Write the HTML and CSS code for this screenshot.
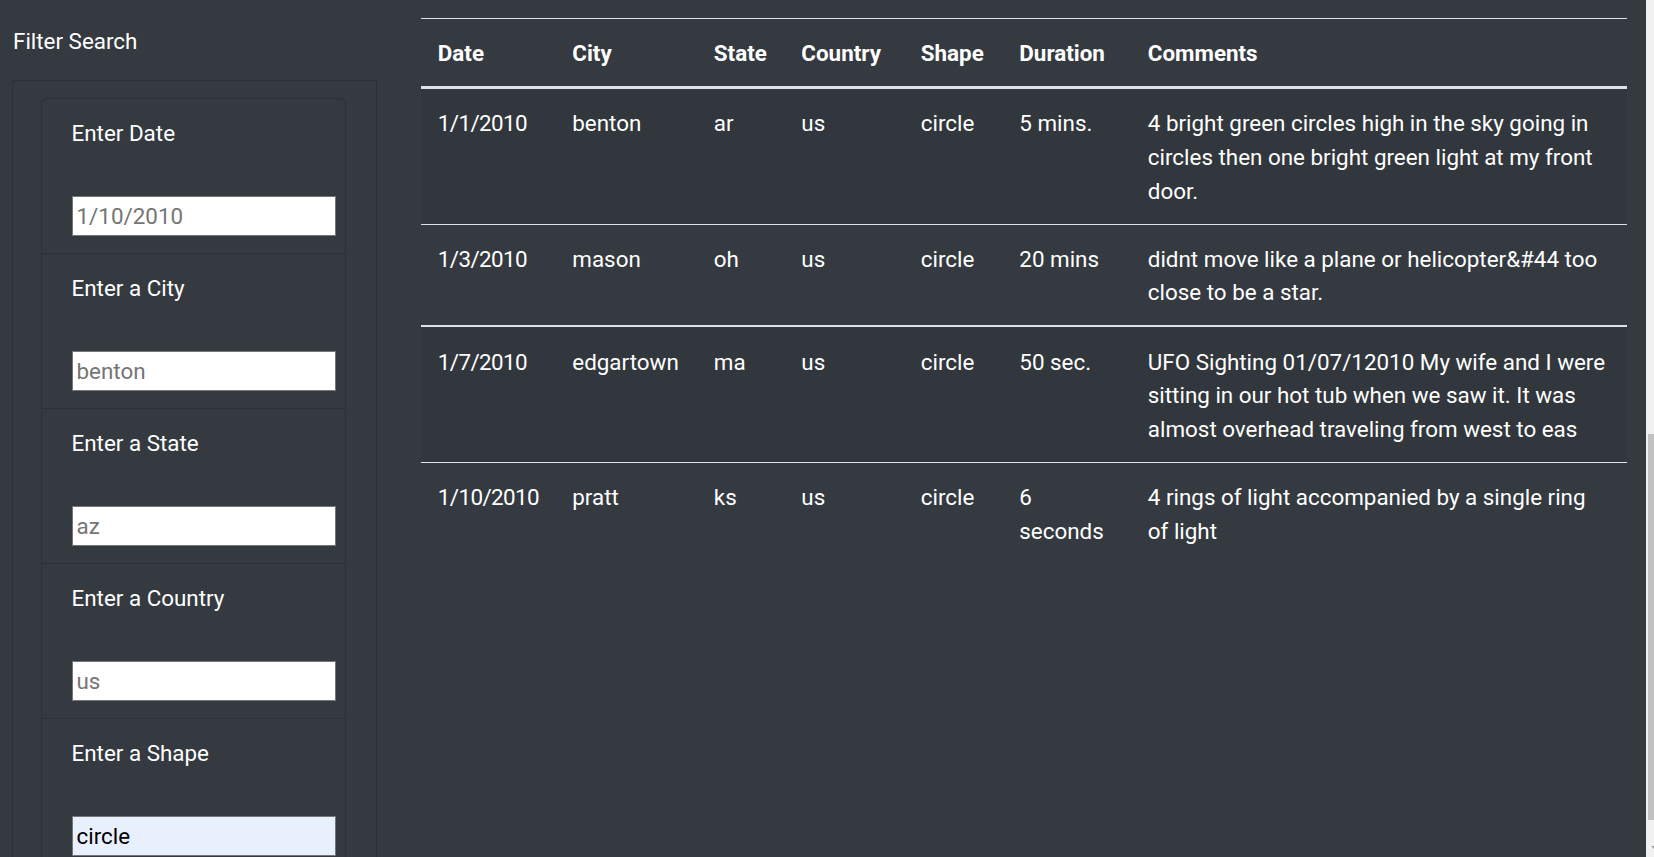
FILE: index.html
```html
<!DOCTYPE html>
<html lang="en">
<head>
<meta charset="utf-8">
<title>UFO Sightings</title>
<link rel="stylesheet" href="styles.css">
</head>
<body>
<div class="page">
  <aside class="sidebar">
    <h2 class="filter-title">Filter Search</h2>
    <div class="panel">
      <ul class="filters">
        <li class="filter-item">
          <label class="filter-label" for="datetime">Enter Date</label>
          <input class="filter-input" id="datetime" type="text" placeholder="1/10/2010">
        </li>
        <li class="filter-item">
          <label class="filter-label" for="city">Enter a City</label>
          <input class="filter-input" id="city" type="text" placeholder="benton">
        </li>
        <li class="filter-item">
          <label class="filter-label" for="state">Enter a State</label>
          <input class="filter-input" id="state" type="text" placeholder="az">
        </li>
        <li class="filter-item">
          <label class="filter-label" for="country">Enter a Country</label>
          <input class="filter-input" id="country" type="text" placeholder="us">
        </li>
        <li class="filter-item">
          <label class="filter-label" for="shape">Enter a Shape</label>
          <input class="filter-input filter-input-filled" id="shape" type="text" value="circle">
        </li>
      </ul>
    </div>
  </aside>

  <main class="main">
    <table class="ufo-table">
      <colgroup>
        <col class="col-date">
        <col class="col-city">
        <col class="col-state">
        <col class="col-country">
        <col class="col-shape">
        <col class="col-duration">
        <col class="col-comments">
      </colgroup>
      <thead>
        <tr>
          <th>Date</th>
          <th>City</th>
          <th>State</th>
          <th>Country</th>
          <th>Shape</th>
          <th>Duration</th>
          <th>Comments</th>
        </tr>
      </thead>
      <tbody>
        <tr class="row-odd">
          <td class="cell-date">1/1/2010</td>
          <td>benton</td>
          <td>ar</td>
          <td>us</td>
          <td>circle</td>
          <td>5 mins.</td>
          <td>4 bright green circles high in the sky going in circles then one bright green light at my front door.</td>
        </tr>
        <tr class="row-even row-thick">
          <td class="cell-date">1/3/2010</td>
          <td>mason</td>
          <td>oh</td>
          <td>us</td>
          <td>circle</td>
          <td>20 mins</td>
          <td>didnt move like a plane or helicopter&amp;#44 too close to be a star.</td>
        </tr>
        <tr class="row-odd">
          <td class="cell-date">1/7/2010</td>
          <td>edgartown</td>
          <td>ma</td>
          <td>us</td>
          <td>circle</td>
          <td>50 sec.</td>
          <td>UFO Sighting 01/07/12010 My wife and I were sitting in our hot tub when we saw it. It was almost overhead traveling from west to eas</td>
        </tr>
        <tr class="row-even row-last">
          <td class="cell-date">1/10/2010</td>
          <td>pratt</td>
          <td>ks</td>
          <td>us</td>
          <td>circle</td>
          <td>6 seconds</td>
          <td>4 rings of light accompanied by a single ring of&nbsp;light</td>
        </tr>
      </tbody>
    </table>
  </main>

  <div class="scrollbar">
    <div class="scroll-track">
      <div class="scroll-thumb"></div>
    </div>
    <div class="scroll-arrow"></div>
  </div>
</div>
</body>
</html>
```
FILE: styles.css
```css
html, body {
  margin: 0;
  padding: 0;
  height: 100%;
  overflow: hidden;
}

body {
  background: #343a40;
  color: #ffffff;
  font-family: Roboto, "Liberation Sans", Arial, sans-serif;
  font-size: 22.4px;
  line-height: 33.6px;
}

.page {
  display: flex;
  height: 857px;
}

/* ---------- sidebar ---------- */
.sidebar {
  width: 390px;
  flex: none;
  padding-left: 12px;
  box-sizing: border-box;
}

.filter-title {
  margin: 25px 0 21px 0;
  padding-left: 1px;
  font-size: 22.4px;
  line-height: 33.6px;
  font-weight: 400;
}

.panel {
  width: 365px;
  box-sizing: border-box;
  border: 1px solid #2c3136;
  border-bottom: none;
  padding: 17px 30px 0 28px;
  height: 900px;
}

.filters {
  list-style: none;
  margin: 0;
  padding: 0;
  border: 1px solid #2c3136;
  border-bottom: none;
  border-radius: 6px 6px 0 0;
}

.filter-item {
  padding: 18.3px 28px 17px 29.5px;
  border-top: 1px solid #2c3136;
}

.filter-item:first-child {
  border-top: none;
}

.filter-label {
  display: block;
  margin-bottom: 45.1px;
  line-height: 33.6px;
}

.filter-input {
  display: block;
  box-sizing: border-box;
  width: 264px;
  height: 40px;
  margin: 0;
  padding: 1px 4px;
  border: 1px solid #767676;
  border-radius: 0;
  background: #ffffff;
  color: #000000;
  font-family: Roboto, "Liberation Sans", Arial, sans-serif;
  font-size: 22.4px;
  outline: none;
}

.filter-input::placeholder {
  color: #757575;
  opacity: 1;
}

.filter-input-filled {
  background: #e8f0fe;
  color: #000000;
}

/* ---------- main table ---------- */
.main {
  flex: 1;
  padding: 18px 19px 0 31px;
  min-width: 0;
}

.ufo-table {
  width: 1206px;
  table-layout: fixed;
  border-collapse: collapse;
  color: #ffffff;
}

.col-date { width: 134.5px; }
.col-city { width: 141.5px; }
.col-state { width: 87.5px; }
.col-country { width: 119.5px; }
.col-shape { width: 98.5px; }
.col-duration { width: 128.5px; }
.col-comments { width: 496px; }

.ufo-table th,
.ufo-table td {
  padding: 18.3px 16.8px 15.3px 16.8px;
  text-align: left;
  vertical-align: top;
  line-height: 33.6px;
}

.ufo-table th {
  font-weight: 700;
  border-top: 1px solid #dee2e6;
  border-bottom: 3px solid #dee2e6;
}

.ufo-table td {
  border-bottom: 1px solid #dee2e6;
}

.row-odd td {
  background: rgba(0, 0, 0, 0.05);
}

.row-thick td {
  border-bottom-width: 2px;
}

.row-last td {
  border-bottom: none;
}

.cell-date {
  letter-spacing: -0.6px;
}

/* ---------- fake window scrollbar ---------- */
.scrollbar {
  width: 8px;
  flex: none;
  background: #f1f1f1;
  display: flex;
  flex-direction: column;
}

.scroll-track {
  flex: 1;
  padding: 434px 0 0 2px;
}

.scroll-thumb {
  height: 386px;
  background: #c1c1c1;
}

.scroll-arrow {
  height: 20px;
  position: relative;
}

.scroll-arrow::after {
  content: "";
  position: absolute;
  left: 5px;
  top: 9px;
  border-left: 3px solid transparent;
  border-right: 3px solid transparent;
  border-top: 3px solid #a3a3a3;
}
```
